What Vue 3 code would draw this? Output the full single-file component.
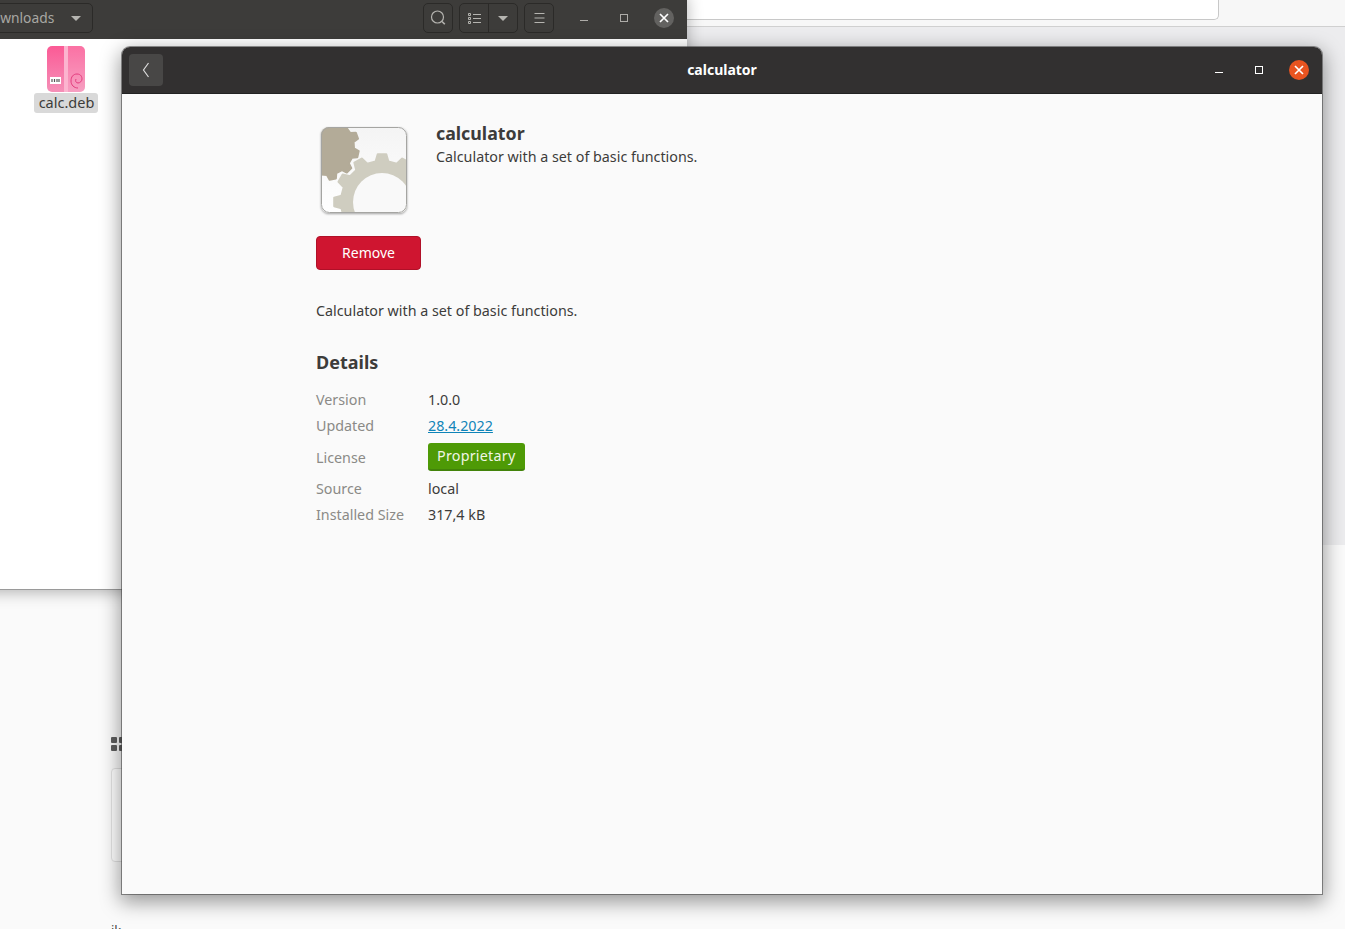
<script setup>
function gear(cx, cy, rOuter, rRoot, teeth, phase) {
  const pts = []
  const step = (Math.PI * 2) / teeth
  for (let i = 0; i < teeth; i++) {
    const a = phase + i * step
    const p = [
      [rRoot, -0.3],
      [rOuter, -0.17],
      [rOuter, 0.17],
      [rRoot, 0.3],
    ]
    p.forEach(([r, k]) => {
      const t = a + k * step
      pts.push((cx + r * Math.cos(t)).toFixed(1) + ' ' + (cy + r * Math.sin(t)).toFixed(1))
    })
  }
  return 'M' + pts.join('L') + 'Z'
}
const bigGear = gear(61, 75, 48, 41, 12, -Math.PI / 2)
const smallGear = gear(5, 20, 33, 28, 11, -0.35)
const details = [
  { label: 'Version', value: '1.0.0', kind: 'text' },
  { label: 'Updated', value: '28.4.2022', kind: 'link' },
  { label: 'License', value: 'Proprietary', kind: 'badge' },
  { label: 'Source', value: 'local', kind: 'text' },
  { label: 'Installed Size', value: '317,4 kB', kind: 'text' },
]
</script>

<template>
  <div class="desktop">
    <div class="page">
      <div class="page-top">
        <div class="page-input"></div>
      </div>
      <div class="page-band"></div>
      <div class="page-lower">
        <div class="grid-icon"><i></i><i></i><i></i><i></i></div>
        <div class="page-card"></div>
        <div class="page-foot">ik</div>
      </div>
    </div>

    <section class="files">
      <header class="files-bar">
        <div class="path-btn">
          <span class="path-text">Downloads</span>
          <span class="caret"></span>
        </div>
        <div class="files-tools">
          <button class="tool">
            <svg width="18" height="18" viewBox="0 0 18 18" fill="none" stroke="#b5b4b0" stroke-width="1.2">
              <circle cx="8.500" cy="8" r="6" />
              <path d="M13 12.500l2.800 2.800" stroke-width="1.6" />
            </svg>
          </button>
          <div class="tool-group">
            <button class="tool-part">
              <svg width="13" height="11" viewBox="0 0 13 11" fill="none" stroke="#b5b4b0">
                <path d="M.5 .5h2v2h-2zM.5 4.500h2v2h-2zM.5 8.500h2v2h-2zM5 1.500h8M5 5.500h8M5 9.500h8" />
              </svg>
            </button>
            <button class="tool-part tool-part-end"><span class="caret"></span></button>
          </div>
          <button class="tool">
            <svg width="11" height="10" viewBox="0 0 11 10" fill="none" stroke="#b5b4b0">
              <path d="M.5 .5h10M.5 5h10M.5 9.500h10" />
            </svg>
          </button>
        </div>
        <div class="win-controls">
          <span class="ctl"><span class="min dim"></span></span>
          <span class="ctl"><span class="max dim"></span></span>
          <span class="ctl">
            <span class="close close-gray">
              <svg width="10" height="10" viewBox="0 0 10 10" stroke="#fff" stroke-width="1.7"><path d="M1 1l8 8M9 1l-8 8" /></svg>
            </span>
          </span>
        </div>
      </header>
      <div class="files-body">
        <div class="file">
          <svg class="deb" width="38" height="46" viewBox="0 0 38 46">
            <defs>
              <linearGradient id="debFill" x1="0" y1="0" x2="0" y2="1">
                <stop offset="0" stop-color="#fb5a95" />
                <stop offset="1" stop-color="#f590b8" />
              </linearGradient>
            </defs>
            <rect width="38" height="46" rx="5" fill="url(#debFill)" />
            <path d="M21 0h12a5 5 0 0 1 5 5v36a5 5 0 0 1-5 5H21z" fill="#fff" opacity=".14" />
            <rect x="17" width="4" height="46" fill="#fcb4cf" />
            <rect x="3" y="31" width="11" height="7" fill="#fff" />
            <path d="M5 33v3M7.500 33v3M10 33v3M12 33v3" stroke="#555" stroke-width="1.200" />
            <path d="M31 42c-4 0-7-3-7-7s2-7 6-7 5 3 5 5-2 4-4 4-3-2-2-4" fill="none" stroke="#e33b7d" stroke-width="1" />
          </svg>
          <span class="file-name">calc.deb</span>
        </div>
      </div>
    </section>

    <section class="app">
      <header class="app-bar">
        <button class="back">
          <svg width="8" height="16" viewBox="0 0 8 16" fill="none" stroke="#dcdcdc" stroke-width="1.200">
            <path d="M6.500 1L1.500 8l5 7" />
          </svg>
        </button>
        <h1 class="app-title">calculator</h1>
        <div class="win-controls">
          <span class="ctl"><span class="min"></span></span>
          <span class="ctl"><span class="max"></span></span>
          <span class="ctl">
            <span class="close">
              <svg width="10" height="10" viewBox="0 0 10 10" stroke="#fff" stroke-width="1.7"><path d="M1 1l8 8M9 1l-8 8" /></svg>
            </span>
          </span>
        </div>
      </header>

      <main class="content">
        <div class="summary">
          <div class="icon-col">
            <svg class="app-icon" width="86" height="86" viewBox="0 0 86 86">
              <defs>
                <clipPath id="tile"><rect x="0" y="0" width="86" height="86" rx="8" /></clipPath>
                <linearGradient id="tileFill" x1="0" y1="0" x2="0" y2="1">
                  <stop offset="0" stop-color="#f4f4f4" />
                  <stop offset="1" stop-color="#ffffff" />
                </linearGradient>
              </defs>
              <g clip-path="url(#tile)">
                <rect width="86" height="86" fill="url(#tileFill)" />
                <path :d="bigGear" fill="#cfcdc0" stroke="#cfcdc0" stroke-width="2" stroke-linejoin="round" />
                <circle cx="61" cy="75" r="29" fill="#f9f9f9" />
                <path :d="smallGear" fill="#b3ab98" stroke="#b3ab98" stroke-width="2" stroke-linejoin="round" />
              </g>
              <rect x=".5" y=".5" width="85" height="85" rx="8" fill="none" stroke="#a5a5a2" />
            </svg>
          </div>
          <div class="summary-text">
            <h2 class="name">calculator</h2>
            <p class="tagline">Calculator with a set of basic functions.</p>
          </div>
        </div>

        <button class="remove">Remove</button>

        <p class="description">Calculator with a set of basic functions.</p>

        <h3 class="details-title">Details</h3>
        <dl class="details">
          <template v-for="row in details" :key="row.label">
            <dt>{{ row.label }}</dt>
            <dd>
              <a v-if="row.kind === 'link'" class="link" href="#">{{ row.value }}</a>
              <span v-else-if="row.kind === 'badge'" class="badge">{{ row.value }}</span>
              <template v-else>{{ row.value }}</template>
            </dd>
          </template>
        </dl>
      </main>
    </section>
  </div>
</template>

<style>
html, body { margin: 0; height: 100%; overflow: hidden; }
</style>

<style scoped>
.desktop {
  position: relative;
  width: 1345px;
  height: 929px;
  overflow: hidden;
  background: #fafafa;
  font-family: "Noto Sans", "Open Sans", sans-serif;
  color: #3d3846;
}
button { font: inherit; border: 0; padding: 0; background: none; }

/* Background page */
.page { display: flex; flex-direction: column; height: 100%; }
.page-top {
  height: 26px;
  flex: none;
  background: #f7f7f7;
  border-bottom: 1px solid #d0d0d0;
  padding-left: 680px;
}
.page-input {
  width: 539px;
  height: 20px;
  box-sizing: border-box;
  background: #fff;
  border: 1px solid #c8c8c8;
  border-top: 0;
  border-radius: 0 0 5px 5px;
}
.page-band { height: 518px; flex: none; background: #ececee; }
.page-lower { flex: 1; padding: 192px 0 0 111px; position: relative; }
.grid-icon {
  display: grid;
  grid-template-columns: 6px 6px;
  gap: 2px;
  width: 14px;
  height: 14px;
}
.grid-icon i { background: #5e5e5e; border-radius: 1px; }
.page-card {
  margin-top: 17px;
  width: 300px;
  height: 92px;
  background: #fff;
  border: 1px solid #e2e2e2;
  border-radius: 4px;
}
.page-foot { margin-top: 60px; font-size: 13px; line-height: 16px; color: #444; }

/* Windows on the desktop */
.files {
  position: absolute;
  left: -40px;
  top: -8px;
  width: 727px;
  height: 597px;
  display: flex;
  flex-direction: column;
  background: #fff;
  border-radius: 0 8px 0 0;
  box-shadow: 0 1px 0 #9a9a9a, 0 3px 16px rgba(0, 0, 0, .3);
}
.files-bar {
  height: 47px;
  flex: none;
  box-sizing: border-box;
  padding: 5px 0 0 10px;
  display: flex;
  align-items: center;
  background: #3d3c3a;
  border-radius: 0 8px 0 0;
}
.path-btn {
  width: 123px;
  height: 30px;
  flex: none;
  box-sizing: border-box;
  display: flex;
  align-items: center;
  border: 1px solid #2b2a28;
  border-radius: 5px;
  padding-left: 11px;
  gap: 17px;
  color: #a8a7a3;
  font-size: 13.800px;
}
.path-text { flex: none; line-height: 28px; margin-top: -1px; }
.caret {
  width: 0;
  height: 0;
  flex: none;
  border-left: 5px solid transparent;
  border-right: 5px solid transparent;
  border-top: 5px solid #b5b4b0;
}
.files-tools { display: flex; gap: 6px; margin-left: 330px; }
.tool, .tool-group {
  height: 30px;
  box-sizing: border-box;
  border: 1px solid #2b2a28;
  border-radius: 5px;
}
.tool { width: 30px; display: flex; align-items: center; justify-content: center; }
.tool-group { display: flex; width: 59px; }
.tool-part { flex: 1; display: flex; align-items: center; justify-content: center; }
.tool-part-end { border-left: 1px solid #2b2a28; }
.win-controls { display: flex; margin-left: auto; align-items: center; padding-right: 3px; }
.ctl { width: 40px; height: 30px; display: flex; align-items: center; justify-content: center; }
.min { width: 8px; height: 1px; margin-top: 4px; background: #fff; }
.max { width: 6px; height: 6px; border: 1px solid #fff; }
.min.dim { background: #aeaca8; }
.max.dim { border-color: #aeaca8; }
.close {
  width: 20px;
  height: 20px;
  border-radius: 50%;
  display: flex;
  align-items: center;
  justify-content: center;
  background: #e95420;
}
.close-gray { background: #636260; }
.files-body { flex: 1; padding: 7px 0 0 66px; }
.file { width: 64px; margin-left: 8px; display: flex; flex-direction: column; align-items: center; }
.deb { flex: none; }
.file-name {
  height: 20px;
  margin-top: 1px;
  padding: 0 4px 0 5px;
  box-sizing: border-box;
  border-radius: 3px;
  background: #d9d9d9;
  color: #3d3c3a;
  font-size: 14.500px;
  line-height: 18px;
  white-space: nowrap;
}

.app {
  position: absolute;
  left: 122px;
  top: 47px;
  width: 1200px;
  height: 847px;
  display: flex;
  flex-direction: column;
  background: #fafafa;
  border-radius: 8px 8px 0 0;
  box-shadow: 0 0 0 1px rgba(60, 60, 60, .55), 0 6px 20px 2px rgba(0, 0, 0, .4);
}
.app-bar {
  position: relative;
  flex: none;
  height: 47px;
  box-sizing: border-box;
  display: flex;
  align-items: center;
  padding-left: 7px;
  background: #323030;
  border-radius: 8px 8px 0 0;
  border-bottom: 1px solid #222;
}
.back {
  width: 34px;
  height: 32px;
  border-radius: 4px;
  background: #484746;
  display: flex;
  align-items: center;
  justify-content: center;
}
.app-title {
  position: absolute;
  left: 0;
  right: 0;
  top: 13px;
  margin: 0;
  text-align: center;
  color: #fff;
  font-size: 14px;
  line-height: 20px;
  font-weight: 700;
}

.content { flex: 1; padding: 25px 0 0 194px; }
.summary { display: flex; height: 119px; }
.icon-col { width: 120px; padding: 8px 0 0 5px; box-sizing: border-box; }
.app-icon { display: block; filter: drop-shadow(0 1px 1px rgba(0, 0, 0, .35)); }
.name { margin: 0; font-size: 17.800px; line-height: 24px; font-weight: 700; color: #3d3c3a; padding-top: 2px; }
.tagline { margin: 2px 0 0; font-size: 14.300px; line-height: 20px; color: #3d3c3a; }
.remove {
  display: block;
  width: 105px;
  height: 34px;
  margin-top: -2px;
  padding-bottom: 2px;
  border-radius: 4px;
  background: #cf1530;
  border: 1px solid #b01028;
  color: #fff;
  font-size: 14px;
}
.description { margin: 30px 0 0; font-size: 14.300px; line-height: 22px; color: #3d3c3a; }
.details-title { margin: 28px 0 0; font-size: 18px; line-height: 24px; font-weight: 700; color: #3d3c3a; }
.details {
  margin: 16px 0 0;
  display: grid;
  grid-template-columns: 112px 1fr;
  row-gap: 6px;
  font-size: 14.300px;
  line-height: 20px;
  align-items: center;
}
.details dt { color: #8b8a87; }
.details dd { margin: 0; color: #3d3c3a; }
.link { color: #0f84b8; text-decoration: underline; }
.badge {
  display: block;
  width: fit-content;
  height: 28px;
  margin: 1px 0 2px;
  box-sizing: border-box;
  padding: 0 9px;
  line-height: 25px;
  letter-spacing: .25px;
  border-radius: 3px;
  background: #4e9a06;
  border-bottom: 2px solid #42830a;
  color: #f0f6e6;
}
</style>
